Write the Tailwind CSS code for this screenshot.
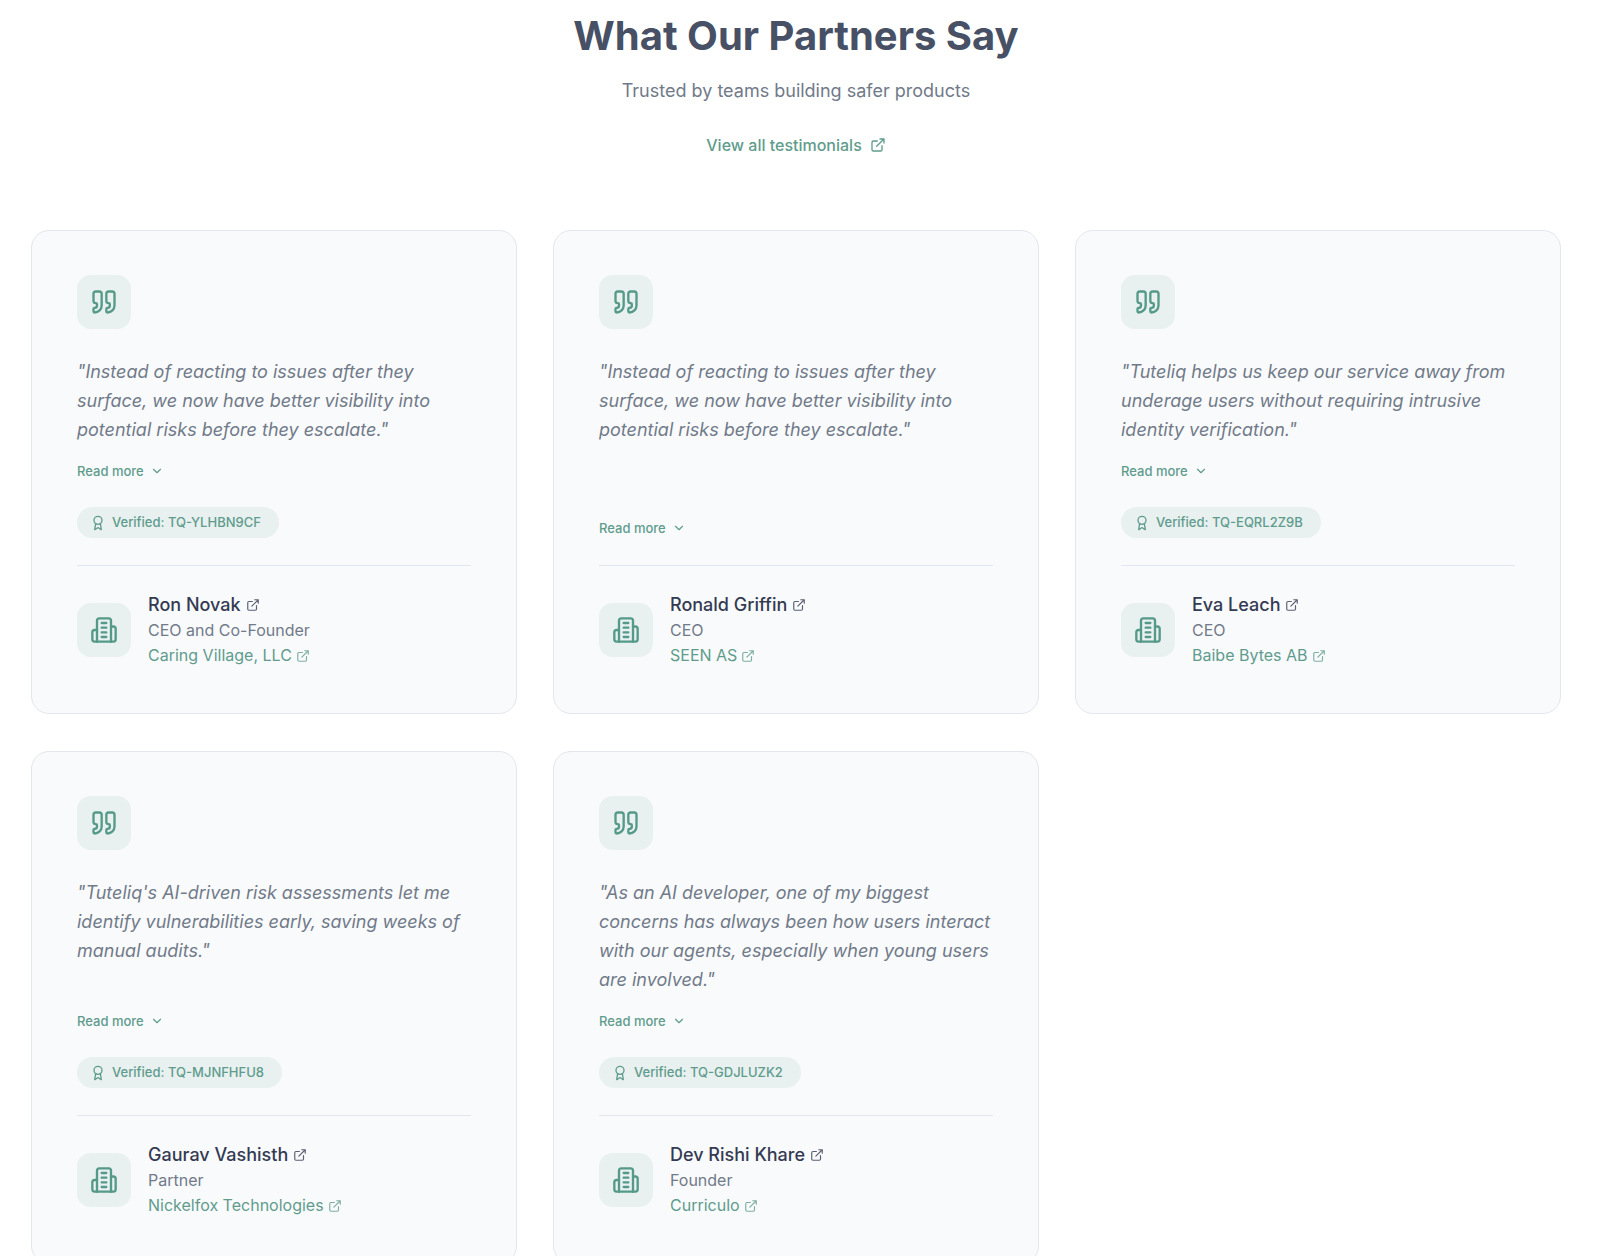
<!DOCTYPE html>
<html lang="en">
<head>
  <meta charset="UTF-8" />
  <meta name="viewport" content="width=device-width, initial-scale=1.0" />
  <title>Tuteliq - What Our Partners Say</title>
  <script src="https://cdn.jsdelivr.net/npm/@tailwindcss/browser@4"></script>
</head>
<body class="bg-white font-['Inter',sans-serif] text-[#717a89]">
  <!-- Icons -->
  <svg class="hidden" fill="none" stroke="currentColor">
    <symbol id="icon-quote" viewBox="0 0 24 24">
      <path d="M16 3a2 2 0 0 0-2 2v6a2 2 0 0 0 2 2 1 1 0 0 1 1 1v1a2 2 0 0 1-2 2 1 1 0 0 0-1 1v2a1 1 0 0 0 1 1 6 6 0 0 0 6-6V5a2 2 0 0 0-2-2z" />
      <path d="M5 3a2 2 0 0 0-2 2v6a2 2 0 0 0 2 2 1 1 0 0 1 1 1v1a2 2 0 0 1-2 2 1 1 0 0 0-1 1v2a1 1 0 0 0 1 1 6 6 0 0 0 6-6V5a2 2 0 0 0-2-2z" />
    </symbol>
    <symbol id="icon-building" viewBox="0 0 24 24">
      <path d="M6 22V4a2 2 0 0 1 2-2h8a2 2 0 0 1 2 2v18Z" />
      <path d="M6 12H4a2 2 0 0 0-2 2v6a2 2 0 0 0 2 2h2" />
      <path d="M18 9h2a2 2 0 0 1 2 2v9a2 2 0 0 1-2 2h-2" />
      <path d="M10 6h4M10 10h4M10 14h4M10 18h4" />
    </symbol>
    <symbol id="icon-award" viewBox="0 0 24 24">
      <path d="m15.477 12.89 1.515 8.526a.5.5 0 0 1-.81.47l-3.58-2.687a1 1 0 0 0-1.197 0l-3.586 2.686a.5.5 0 0 1-.81-.469l1.514-8.526" />
      <circle cx="12" cy="8" r="6" />
    </symbol>
    <symbol id="icon-external" viewBox="0 0 24 24">
      <path d="M15 3h6v6M10 14 21 3M18 13v6a2 2 0 0 1-2 2H5a2 2 0 0 1-2-2V8a2 2 0 0 1 2-2h6" />
    </symbol>
    <symbol id="icon-chevron" viewBox="0 0 24 24">
      <path d="m6 9 6 6 6-6" />
    </symbol>
  </svg>

  <section class="pl-[31px] pr-[39px] pt-3 pb-20">
    <header class="text-center mb-[73px]">
      <h1 class="text-[40px] leading-12 font-bold text-[#475065]">What Our Partners Say</h1>
      <p class="mt-4 text-lg leading-[30px]">Trusted by teams building safer products</p>
      <a href="#" class="mt-[27px] inline-flex items-center gap-2 text-base leading-6 font-medium text-[#5f9c8c] hover:underline">
        View all testimonials
        <svg class="size-4 fill-none stroke-current stroke-2" stroke-linecap="round" stroke-linejoin="round"><use href="#icon-external" /></svg>
      </a>
    </header>

    <div id="testimonials" class="grid grid-cols-1 md:grid-cols-2 lg:grid-cols-3 gap-x-9 gap-y-[37px]"></div>
  </section>

  <script>
    const testimonials = [
      { name: "Ron Novak", role: "CEO and Co-Founder", company: "Caring Village, LLC", code: "TQ-YLHBN9CF", quote: "Instead of reacting to issues after they surface, we now have better visibility into potential risks before they escalate." },
      { name: "Ronald Griffin", role: "CEO", company: "SEEN AS", code: "", quote: "Instead of reacting to issues after they surface, we now have better visibility into potential risks before they escalate." },
      { name: "Eva Leach", role: "CEO", company: "Baibe Bytes AB", code: "TQ-EQRL2Z9B", quote: "Tuteliq helps us keep our service away from underage users without requiring intrusive identity verification." },
      { name: "Gaurav Vashisth", role: "Partner", company: "Nickelfox Technologies", code: "TQ-MJNFHFU8", quote: "Tuteliq's AI-driven risk assessments let me identify vulnerabilities early, saving weeks of manual audits." },
      { name: "Dev Rishi Khare", role: "Founder", company: "Curriculo", code: "TQ-GDJLUZK2", quote: "As an AI developer, one of my biggest concerns has always been how users interact with our agents, especially when young users are involved." },
    ];

    const icon = (id, classes) =>
      `<svg class="${classes} shrink-0 fill-none stroke-current stroke-2" stroke-linecap="round" stroke-linejoin="round"><use href="#icon-${id}" /></svg>`;

    const list = document.getElementById("testimonials");

    testimonials.forEach(t => {
      const badge = t.code
        ? `<div class="mt-[26px] self-start flex items-center gap-[6px] h-[31px] pl-[13px] pr-[18px] rounded-full bg-[#e8f0f0] text-[13px] font-medium text-[#5f9c8c]">${icon("award", "size-4")}Verified: ${t.code}</div>`
        : "";
      const card = document.createElement("article");
      card.className = "flex flex-col px-[45px] pt-[44px] pb-[45px] rounded-[18px] border border-[#e2e6ee] bg-[#f9fafc]";
      card.innerHTML = `
        <div class="size-[54px] flex items-center justify-center rounded-[14px] bg-[#e8f0f0] text-[#559a88]">${icon("quote", "size-7")}</div>
        <blockquote class="mt-7 grow text-lg leading-[29px] italic">"${t.quote}"</blockquote>
        <button type="button" class="mt-[17px] self-start flex items-center gap-[6px] text-[13px] leading-5 font-medium text-[#5f9c8c] cursor-pointer">Read more${icon("chevron", "size-[14px]")}</button>
        ${badge}
        <div class="mt-[27px] pt-[26px] border-t border-[#e2e6ee] flex items-center gap-[17px]">
          <div class="size-[54px] flex items-center justify-center rounded-[14px] bg-[#e8f0f0] text-[#559a88]">${icon("building", "size-7")}</div>
          <div class="text-base leading-[25px]">
            <a href="#" class="flex items-center gap-[5px] text-lg leading-[26px] font-medium text-[#343a52] hover:underline">${t.name}${icon("external", "size-[14px] opacity-80")}</a>
            <p>${t.role}</p>
            <a href="#" class="flex items-center gap-1 text-[#5f9c8c] hover:underline">${t.company}${icon("external", "size-[14px] opacity-80")}</a>
          </div>
        </div>`;
      list.appendChild(card);
    });
  </script>
</body>
</html>
